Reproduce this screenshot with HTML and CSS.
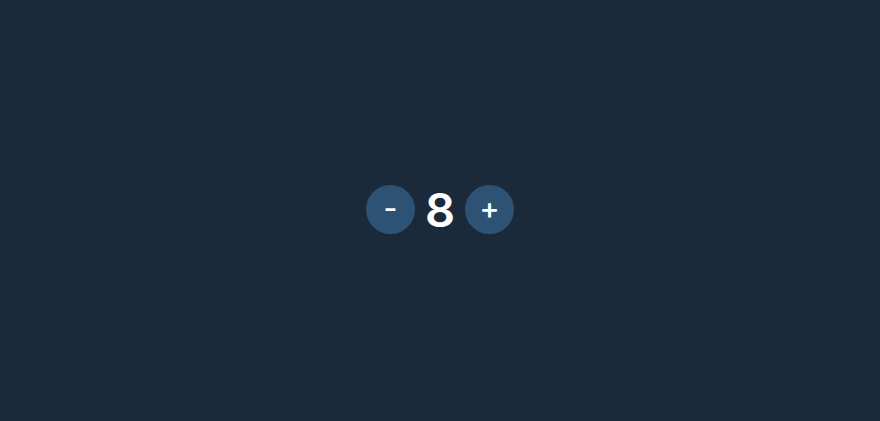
FILE: index.html
```html
<!DOCTYPE html>
<html>
<head>
<meta charset="utf-8">
<link rel="stylesheet" href="styles.css">
</head>
<body>
<div class="counter">
  <button class="btn">-</button>
  <span class="value">8</span>
  <button class="btn">+</button>
</div>
</body>
</html>
```
FILE: styles.css
```css
html, body {
  margin: 0;
  height: 100%;
}
body {
  background: #1b2a3b;
  font-family: "Inter", sans-serif;
  display: flex;
  align-items: center;
  justify-content: center;
}
.counter {
  display: flex;
  align-items: center;
  gap: 10px;
  margin-top: -2px;
}
.btn {
  width: 49px;
  height: 49px;
  border-radius: 50%;
  border: none;
  background: #2e5273;
  color: #ffffff;
  font-family: "Inter", sans-serif;
  font-weight: 500;
  font-size: 30px;
  line-height: 1;
  padding: 0 0 3px;
  display: flex;
  align-items: center;
  justify-content: center;
}
.value {
  color: #ffffff;
  font-size: 47px;
  font-weight: 600;
  line-height: 1;
  width: 30px;
  text-align: center;
}
```
